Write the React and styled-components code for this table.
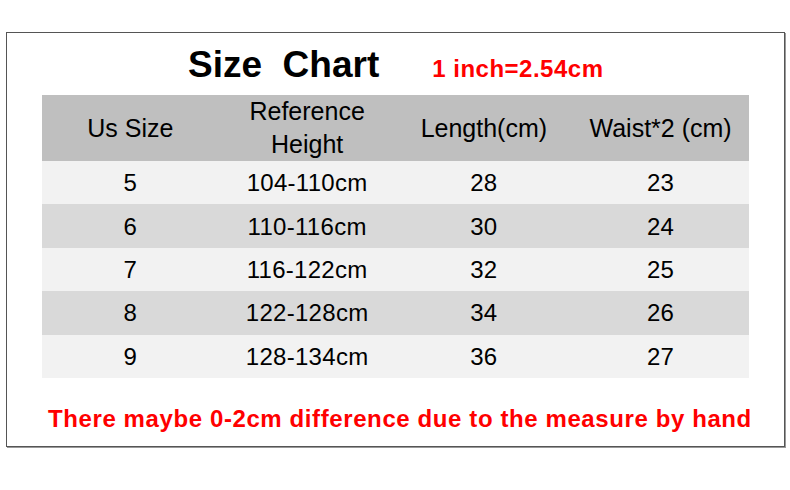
import styled, { createGlobalStyle } from "styled-components";

const GlobalStyle = createGlobalStyle`
  body {
    margin: 0;
    background: #fff;
    font-family: "Liberation Sans", Arial, sans-serif;
  }
`;

const Page = styled.div`
  width: 790px;
  height: 490px;
  padding: 32px 0 0 6px;
  box-sizing: border-box;
`;

const Frame = styled.div`
  width: 779px;
  height: 415px;
  box-sizing: border-box;
  border: 1px solid #555;
  box-shadow: 1px 1px 0 #999;
  padding: 0 35px;
  display: flex;
  flex-direction: column;
`;

const TitleRow = styled.div`
  height: 62px;
  box-sizing: border-box;
  padding: 13px 0 0 146px;
  display: flex;
  align-items: baseline;
  gap: 53px;
`;

const Title = styled.h1`
  margin: 0;
  font-size: 37px;
  line-height: 37px;
  font-weight: bold;
  color: #000;
  white-space: pre;
`;

const Note = styled.span`
  font-size: 24px;
  font-weight: bold;
  letter-spacing: 0.5px;
  color: #f00;
`;

const Table = styled.div`
  display: grid;
  grid-template-columns: repeat(4, 1fr);
  width: 707px;
`;

const Row = styled.div`
  display: contents;
`;

const Cell = styled.div`
  height: ${(p) => (p.$head ? "66px" : "43.4px")};
  background: ${(p) => p.$bg};
  display: flex;
  align-items: center;
  justify-content: center;
  text-align: center;
  color: #000;
  font-size: ${(p) => (p.$head ? "25px" : "24px")};
  letter-spacing: ${(p) => (p.$head ? "0" : "0.3px")};
  line-height: 33px;
`;

const Footer = styled.p`
  margin: 29px 0 0;
  padding-left: 6px;
  font-size: 24px;
  line-height: 24px;
  font-weight: bold;
  letter-spacing: 0.6px;
  color: #f00;
  text-align: center;
  white-space: nowrap;
`;

const heads = ["Us Size", "Reference\nHeight", "Length(cm)", "Waist*2 (cm)"];

const rows = [
  ["5", "104-110cm", "28", "23"],
  ["6", "110-116cm", "30", "24"],
  ["7", "116-122cm", "32", "25"],
  ["8", "122-128cm", "34", "26"],
  ["9", "128-134cm", "36", "27"],
];

const App = () => {
  return (
    <Page>
      <GlobalStyle />
      <Frame>
        <TitleRow>
          <Title>{"Size  Chart"}</Title>
          <Note>1 inch=2.54cm</Note>
        </TitleRow>
        <Table>
          <Row>
            {heads.map((h) => (
              <Cell key={h} $head $bg="#bfbfbf">
                <span style={{ whiteSpace: "pre-line" }}>{h}</span>
              </Cell>
            ))}
          </Row>
          {rows.map((r, i) => (
            <Row key={r[0]}>
              {r.map((v, j) => (
                <Cell key={j} $bg={i % 2 ? "#d9d9d9" : "#f2f2f2"}>
                  {v}
                </Cell>
              ))}
            </Row>
          ))}
        </Table>
        <Footer>There maybe 0-2cm difference due to the measure by hand</Footer>
      </Frame>
    </Page>
  );
};

export default App;
